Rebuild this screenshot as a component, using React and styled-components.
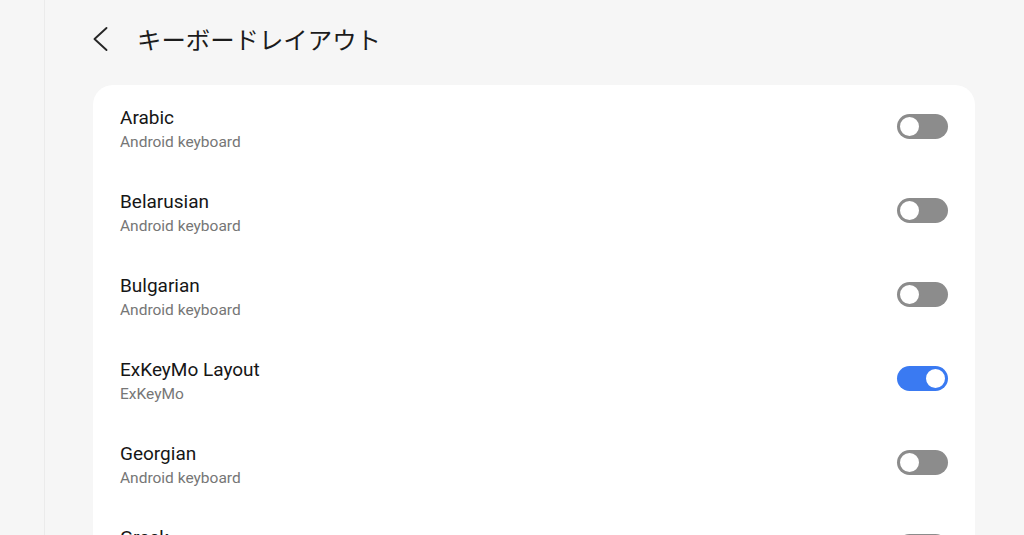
import React, { useState } from 'react';
import styled, { createGlobalStyle } from 'styled-components';

const GlobalStyle = createGlobalStyle`
  html, body {
    margin: 0;
    padding: 0;
    height: 100%;
    overflow: hidden;
    background: #f6f6f6;
  }
  #root {
    height: 100%;
  }
`;

const Page = styled.div`
  display: flex;
  height: 535px;
  overflow: hidden;
  background: #f6f6f6;
  font-family: Roboto, "Noto Sans CJK JP", sans-serif;
`;

const Sidebar = styled.div`
  width: 44px;
  flex-shrink: 0;
  border-right: 1px solid #ebebeb;
`;

const Main = styled.main`
  flex: 1;
  padding: 0 49px 0 48px;
  display: flex;
  flex-direction: column;
`;

const Header = styled.header`
  height: 85px;
  flex-shrink: 0;
  display: flex;
  align-items: center;
  padding-bottom: 8px;
  box-sizing: border-box;
`;

const BackButton = styled.button`
  width: 28px;
  height: 28px;
  padding: 0;
  margin-right: 16px;
  border: none;
  background: none;
  display: flex;
  align-items: center;
  justify-content: flex-start;
  color: #262626;
`;

const Title = styled.h1`
  margin: 0;
  font-family: "Noto Sans CJK JP", Roboto, sans-serif;
  font-size: 24.4px;
  font-weight: 400;
  color: #1c1c1c;
  letter-spacing: 0;
`;

const Card = styled.section`
  flex-shrink: 0;
  background: #ffffff;
  border-radius: 20px;
  padding: 0 27px;
`;

const Row = styled.div`
  height: 84px;
  display: flex;
  align-items: center;
  justify-content: space-between;
`;

const Labels = styled.div`
  display: flex;
  flex-direction: column;
  gap: 2px;
  padding-top: 4px;
`;

const Name = styled.div`
  font-size: 19px;
  line-height: 24px;
  color: #161616;
`;

const Sub = styled.div`
  font-size: 15.5px;
  line-height: 20px;
  color: #767676;
`;

const Track = styled.button`
  position: relative;
  width: 51px;
  height: 25px;
  padding: 0;
  border: none;
  border-radius: 13px;
  background: ${p => (p.$on ? '#3a7af2' : '#8c8c8c')};
  cursor: pointer;
  flex-shrink: 0;
  margin-bottom: 2px;
`;

const Knob = styled.span`
  position: absolute;
  top: 1px;
  left: ${p => (p.$on ? '27px' : '1px')};
  width: 19px;
  height: 19px;
  border-radius: 50%;
  background: #ffffff;
  border: 2px solid ${p => (p.$on ? '#3a7af2' : '#8c8c8c')};
  box-sizing: content-box;
`;

const layouts = [
  { name: 'Arabic', sub: 'Android keyboard', on: false },
  { name: 'Belarusian', sub: 'Android keyboard', on: false },
  { name: 'Bulgarian', sub: 'Android keyboard', on: false },
  { name: 'ExKeyMo Layout', sub: 'ExKeyMo', on: true },
  { name: 'Georgian', sub: 'Android keyboard', on: false },
  { name: 'Greek', sub: 'Android keyboard', on: false },
];

const Toggle = ({ on, onChange }) => (
  <Track $on={on} onClick={onChange} aria-pressed={on}>
    <Knob $on={on} />
  </Track>
);

const App = () => {
  const [items, setItems] = useState(layouts);

  const flip = (i) => {
    setItems(items.map((it, j) => (j === i ? { ...it, on: !it.on } : it)));
  };

  return (
    <>
      <GlobalStyle />
      <Page>
        <Sidebar />
        <Main>
          <Header>
            <BackButton aria-label="back">
              <svg width="16" height="26" viewBox="0 0 16 26" fill="none">
                <path d="M13.5 2 L1.5 13 L13.5 24" stroke="currentColor" strokeWidth="1.9" strokeLinecap="round" strokeLinejoin="round" />
              </svg>
            </BackButton>
            <Title>キーボードレイアウト</Title>
          </Header>
          <Card>
            {items.map((it, i) => (
              <Row key={it.name}>
                <Labels>
                  <Name>{it.name}</Name>
                  <Sub>{it.sub}</Sub>
                </Labels>
                <Toggle on={it.on} onChange={() => flip(i)} />
              </Row>
            ))}
          </Card>
        </Main>
      </Page>
    </>
  );
};

export default App;
